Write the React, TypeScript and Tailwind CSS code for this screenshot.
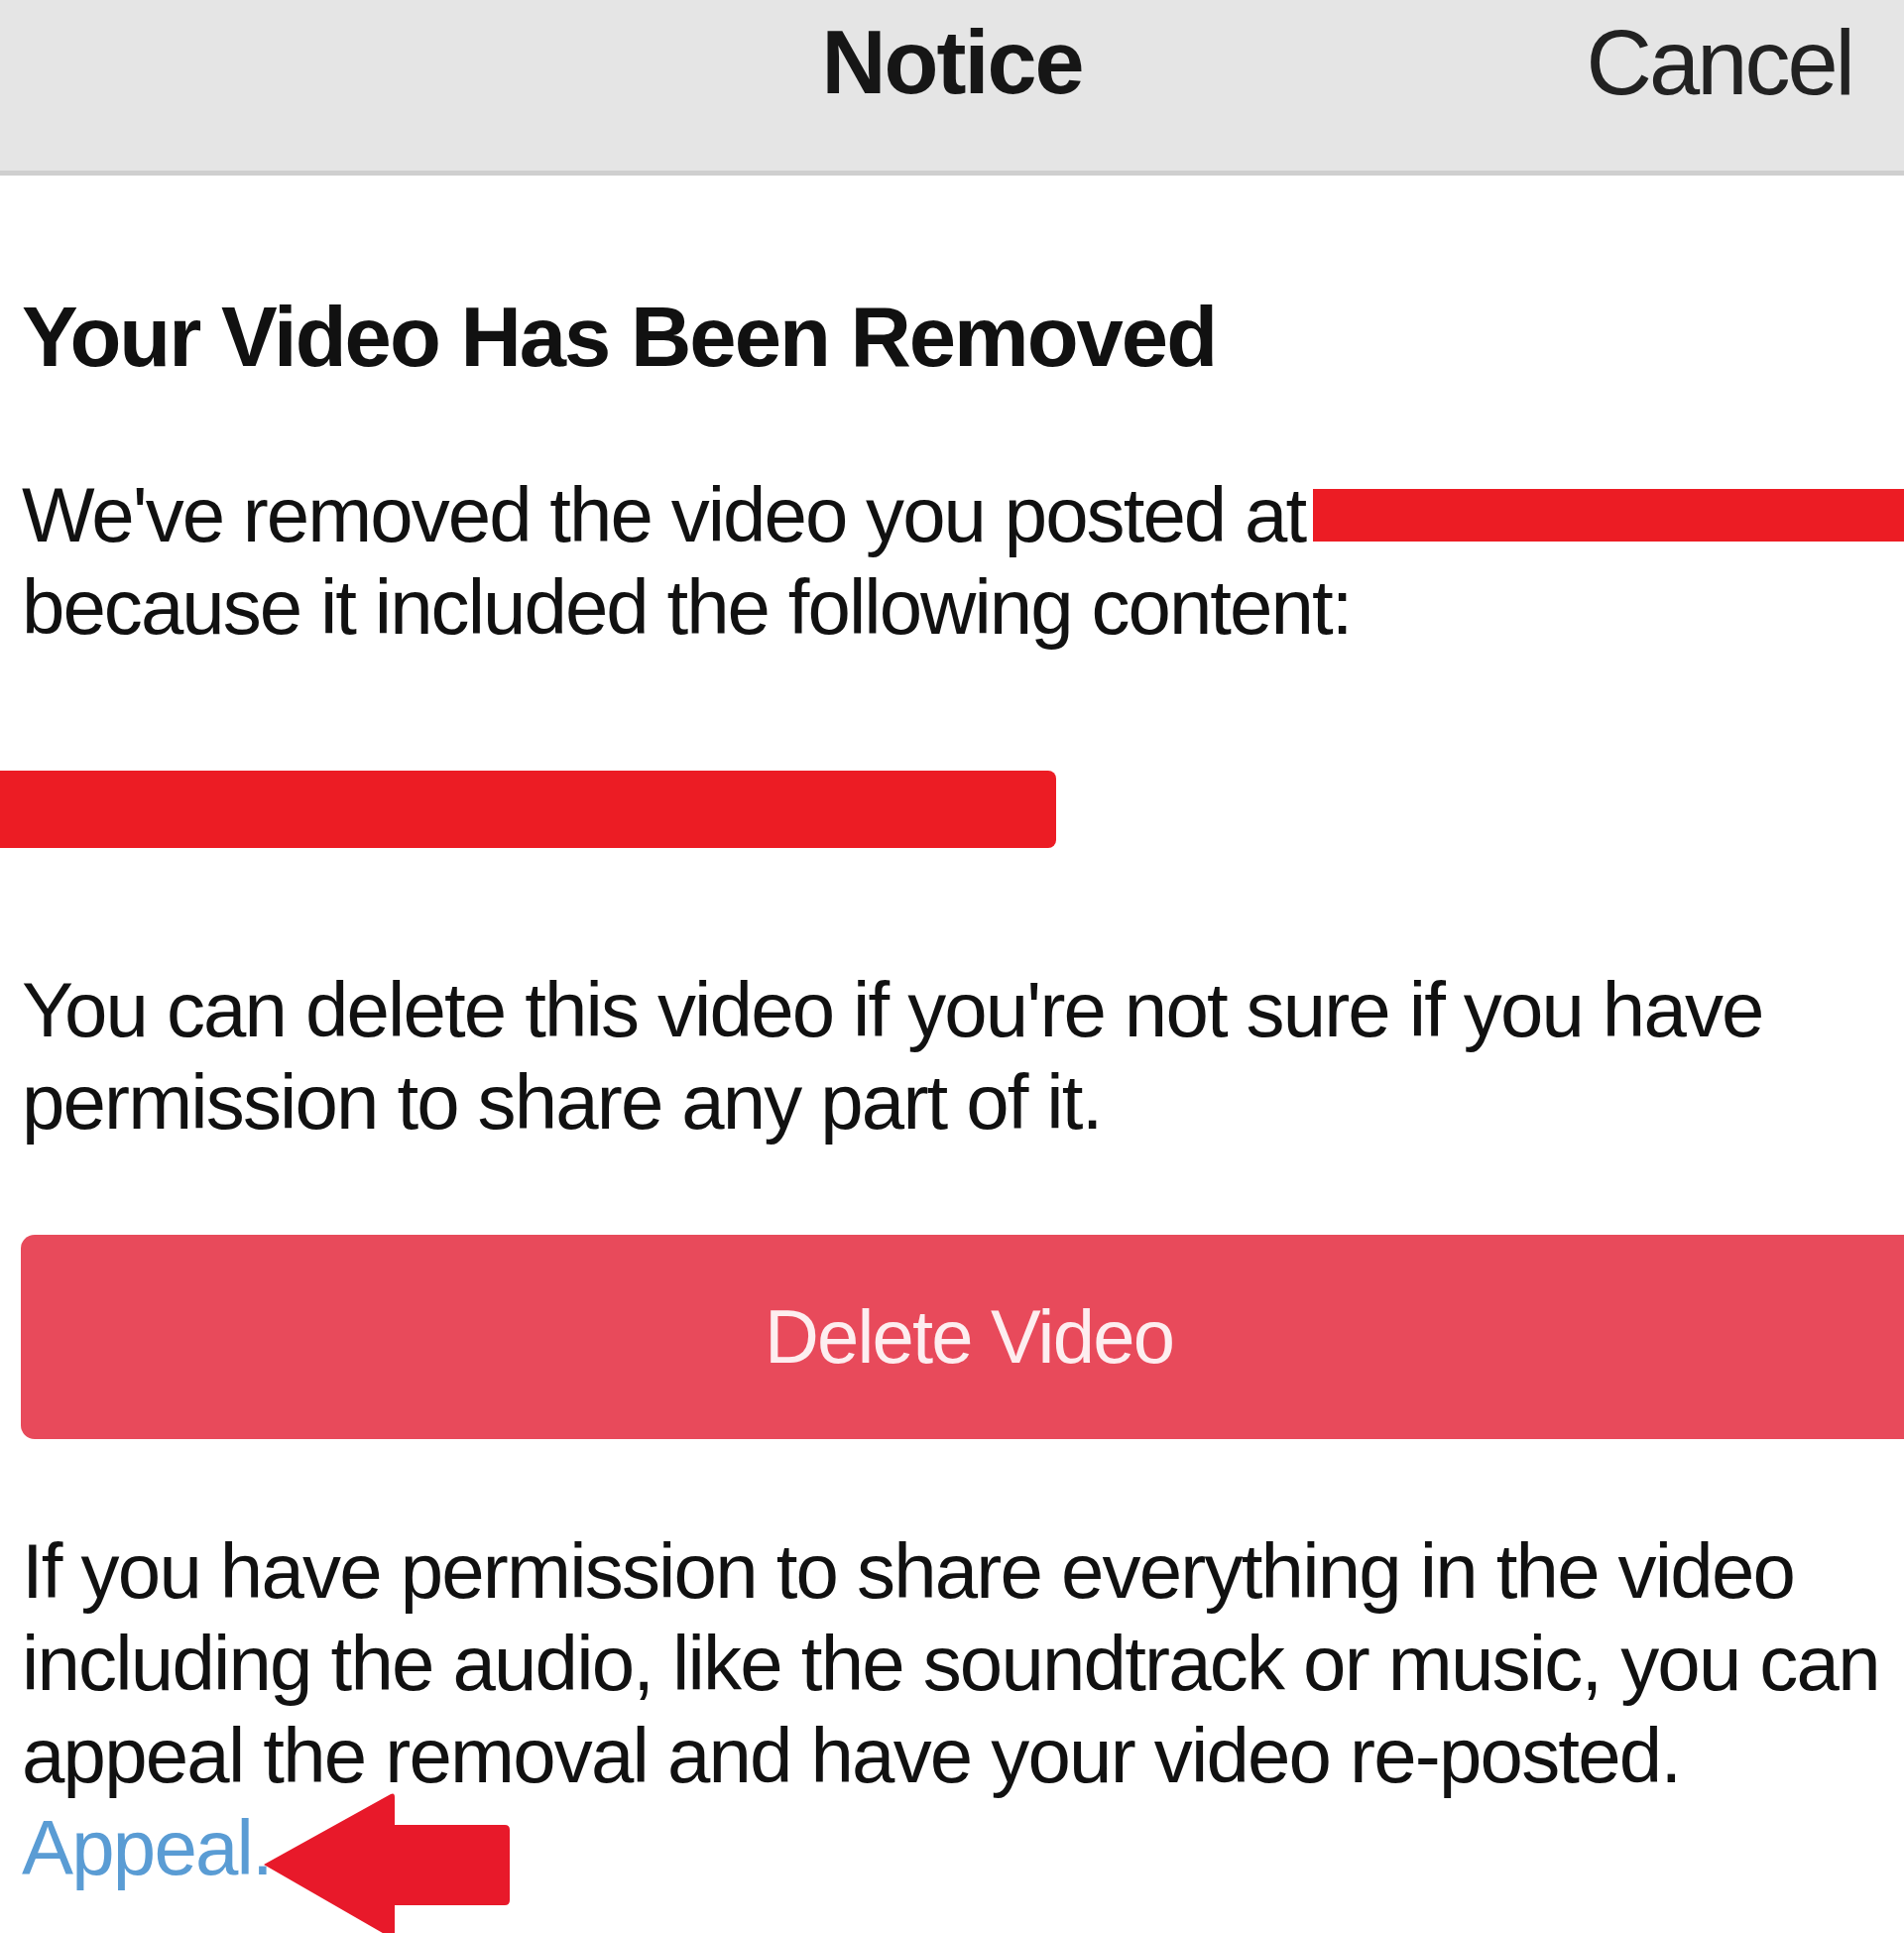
export default function App() {
  return (
    <div className="relative h-[1949px] w-[1920px] overflow-hidden bg-white font-['Liberation_Sans',Arial,sans-serif] text-[#111]">
      {/* nav bar */}
      <header className="relative flex h-[177px] items-start justify-center border-b-[5px] border-[#cfcfcf] bg-[#e5e5e5] pt-[13px]">
        <h1 className="text-[90px] font-bold leading-[100px] tracking-[-2px] text-[#161616]">Notice</h1>
        <button className="absolute right-[52px] top-[13px] text-[92px] leading-[100px] tracking-[-3px] text-[#222]">Cancel</button>
      </header>

      <main className="w-[1933px] pl-[21px]">
        <h2 className="mt-[113px] whitespace-nowrap pl-[1px] text-[85px] font-bold leading-[100px] tracking-[-2px]">
          Your Video Has Been Removed
        </h2>

        <p className="mt-[83px] whitespace-nowrap pl-[1px] text-[78px] leading-[93px] tracking-[-1.95px]">
          We've removed the video you posted at
          <span className="ml-[8px] inline-block h-[53px] w-[640px] bg-[#ec1c24] align-baseline" />
          <br />
          because it included the following content:
        </p>

        <div className="-ml-[21px] mt-[118px] h-[78px] w-[1065px] rounded-r-[8px] bg-[#ec1c24]" />

        <p className="mt-[117px] whitespace-nowrap pl-[1px] text-[78px] leading-[93px] tracking-[-1.85px]">
          You can delete this video if you're not sure if you have
          <br />
          permission to share any part of it.
        </p>

        <button className="mt-[87px] flex h-[206px] w-full items-center justify-center rounded-[14px] bg-[#e84a5b] text-[76px] tracking-[-1.8px] text-[#fdeef0]">
          Delete Video
        </button>

        <p className="mt-[87px] whitespace-nowrap pl-[1px] text-[78px] leading-[93px] tracking-[-1.8px]">
          If you have permission to share everything in the video
          <br />
          including the audio, like the soundtrack or music, you can
          <br />
          appeal the removal and have your video re-posted.
          <br />
          <a className="text-[#5a9cd4]">Appeal.</a>
        </p>
      </main>

      {/* annotation arrow */}
      <svg className="absolute left-[262px] top-[1806px]" width="260" height="160" viewBox="0 0 260 160">
        <path d="M4 74 L132 3 Q136 1 136 6 L136 34 L247 34 Q252 34 252 39 L252 110 Q252 115 247 115 L136 115 L136 150 L4 74 Z" fill="#e8192a" />
      </svg>
    </div>
  );
}
